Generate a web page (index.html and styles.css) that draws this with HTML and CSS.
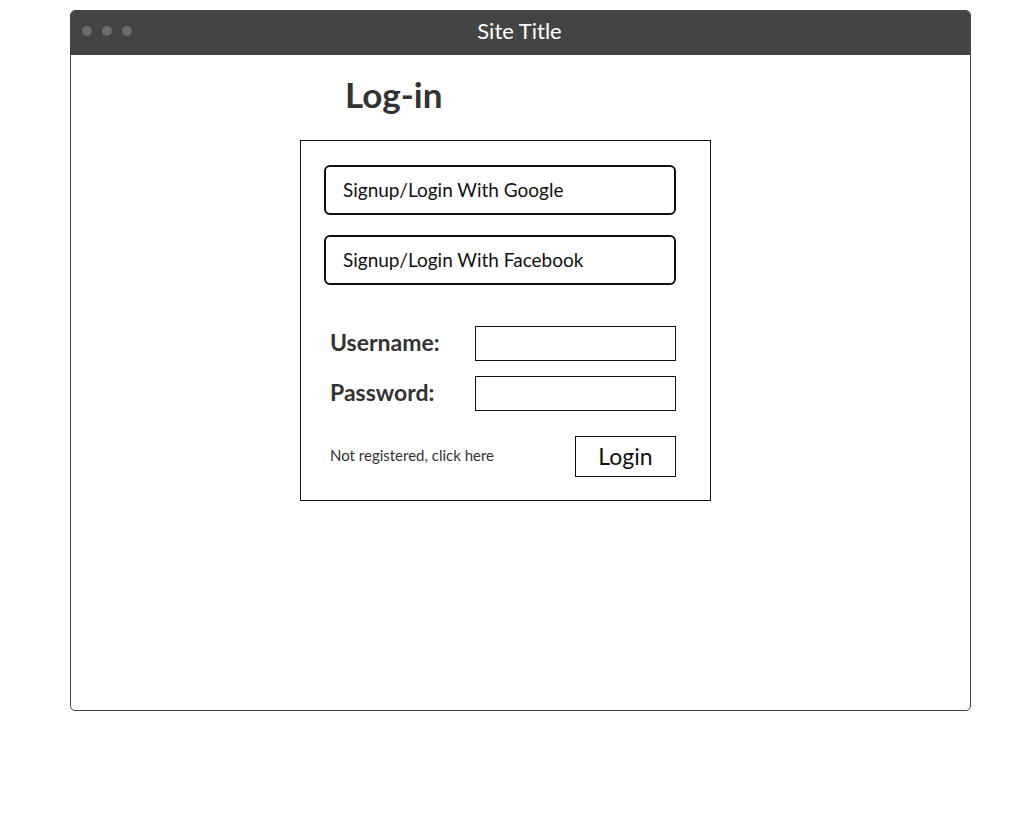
FILE: index.html
```html
<!DOCTYPE html>
<html>
<head>
<meta charset="utf-8">
<link rel="stylesheet" href="styles.css">
</head>
<body>
<div class="window">
  <div class="titlebar">
    <div class="dots"><span class="dot"></span><span class="dot"></span><span class="dot"></span></div>
    <div class="site-title">Site Title</div>
  </div>
  <div class="content">
    <h1 class="heading">Log-in</h1>
    <div class="login-box">
      <div class="social">Signup/Login With Google</div>
      <div class="social">Signup/Login With Facebook</div>
      <div class="fields">
        <div class="field"><span class="label">Username:</span><span class="input"></span></div>
        <div class="field"><span class="label">Password:</span><span class="input"></span></div>
      </div>
      <div class="footer-row">
        <span class="register">Not registered, click here</span>
        <span class="login-btn">Login</span>
      </div>
    </div>
  </div>
</div>
</body>
</html>
```

FILE: styles.css
```css
html, body {
  margin: 0;
  padding: 0;
  background: #fff;
}
body {
  font-family: "Lato", "Liberation Sans", sans-serif;
  color: #222;
}
.window {
  margin: 10px 0 0 70px;
  width: 899px;
  height: 699px;
  border: 1px solid #444;
  border-radius: 5px;
  overflow: hidden;
  display: flex;
  flex-direction: column;
}
.titlebar {
  height: 44px;
  flex: none;
  background: #444;
  position: relative;
  display: flex;
  align-items: center;
  justify-content: center;
}
.dots {
  position: absolute;
  left: 11px;
  top: 15px;
  display: flex;
  gap: 10px;
}
.dot {
  width: 10px;
  height: 10px;
  border-radius: 50%;
  background: #6b6b6b;
}
.site-title {
  color: #fff;
  font-size: 22px;
  line-height: 40px;
  margin-top: -4px;
  margin-left: -2px;
}
.content {
  flex: 1;
  display: flex;
  flex-direction: column;
  padding-left: 229px;
}
.heading {
  margin: 18px 0 0 45px;
  font-size: 35px;
  font-weight: 700;
  color: #333;
  line-height: 42px;
  height: 42px;
}
.login-box {
  margin-top: 25px;
  border: 1px solid #111;
  box-sizing: border-box;
  width: 411px;
  height: 361px;
  padding: 24px 34px 0 23px;
  display: flex;
  flex-direction: column;
}
.social {
  height: 50px;
  box-sizing: border-box;
  border: 2px solid #111;
  border-radius: 6px;
  font-size: 19px;
  line-height: 46px;
  padding-left: 17px;
  color: #111;
  margin-bottom: 20px;
}
.fields {
  margin-top: 21px;
  display: flex;
  flex-direction: column;
  gap: 15px;
}
.field {
  display: flex;
  align-items: center;
  justify-content: space-between;
  padding-left: 6px;
}
.label {
  font-weight: 700;
  font-size: 23px;
  color: #333;
  margin-top: -4px;
}
.input {
  width: 201px;
  height: 35px;
  box-sizing: border-box;
  border: 1px solid #111;
}
.footer-row {
  margin-top: 25px;
  display: flex;
  align-items: center;
  justify-content: space-between;
  padding-left: 6px;
}
.register {
  font-size: 15px;
  color: #333;
  margin-top: -4px;
}
.login-btn {
  width: 101px;
  height: 41px;
  box-sizing: border-box;
  border: 1px solid #111;
  font-size: 23px;
  line-height: 39px;
  text-align: center;
  color: #111;
}
```
